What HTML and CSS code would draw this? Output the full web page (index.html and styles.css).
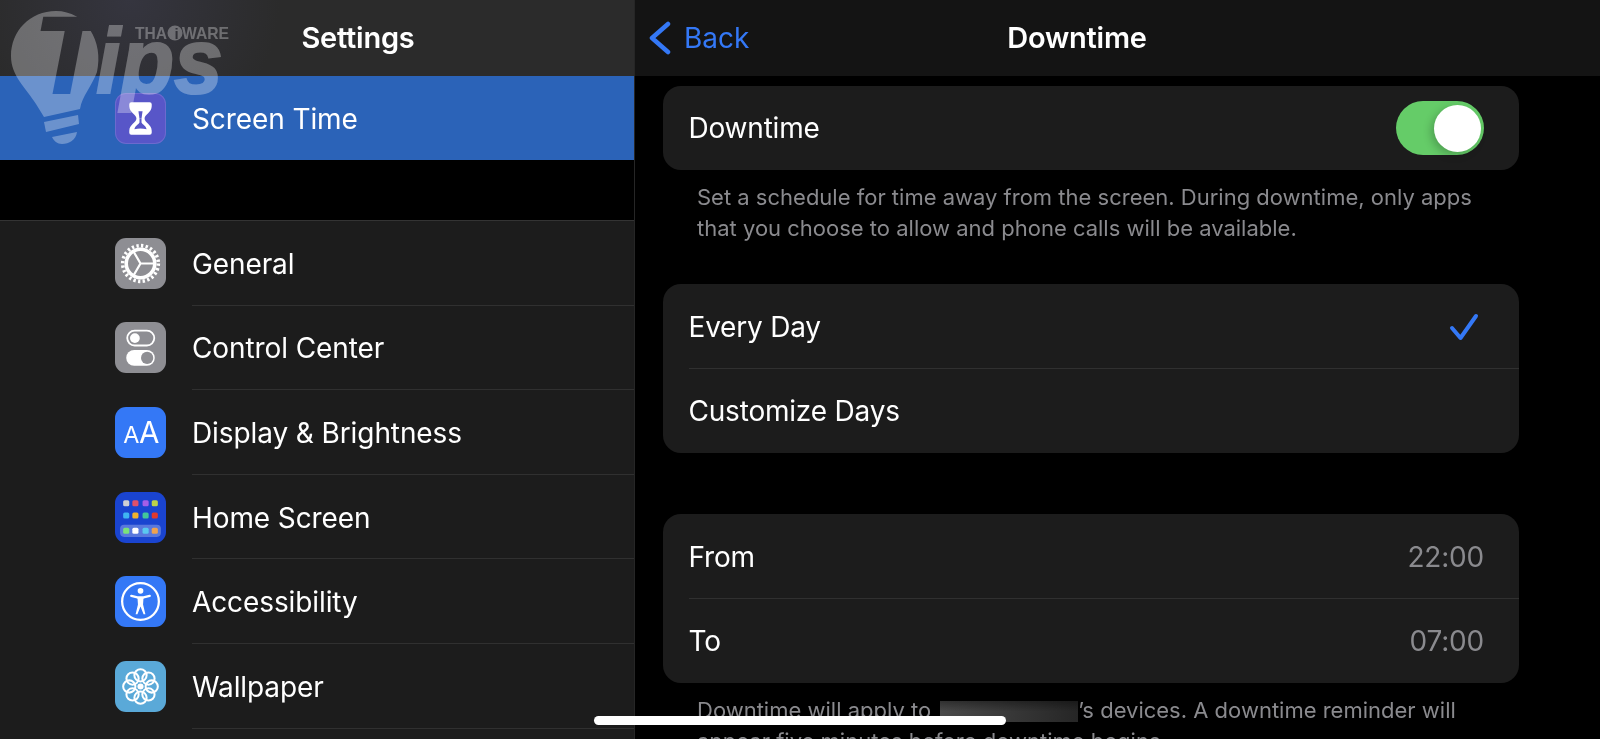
FILE: index.html
```html
<!DOCTYPE html>
<html lang="en">
<head>
<meta charset="utf-8">
<title>Downtime</title>
<link rel="stylesheet" href="styles.css">
</head>
<body>
<div class="screen">
  <aside class="sidebar">
    <header class="side-head"><h1 class="title">Settings</h1></header>
    <div class="row-active">
      <span class="icon icon-purple">
        <svg viewBox="0 0 50 50"><path class="white" d="M14 11q0-2 2-2h18q2 0 2 2v2c0 6-7 8-7 12c0 4 7 6 7 12v2q0 2-2 2h-18q-2 0-2-2v-2c0-6 7-8 7-12c0-4-7-6-7-12z"/><path class="purple" d="M23 18h4l-1 7h-2z"/><path class="purple" d="M24 25h2v4c1 2 4 3 5 6.500c-4-1-8-1-12 0c1-3.500 4-4.500 5-6.500z"/></svg>
      </span>
      <span class="label">Screen Time</span>
    </div>
    <div class="side-gap"></div>
    <ul class="side-list">
      <li class="side-row">
        <span class="icon icon-gray">
          <svg viewBox="0 0 50 50"><circle class="gear-teeth" cx="25" cy="25" r="17.500"/><circle class="gear-ring" cx="25" cy="25" r="14"/><path class="gear-spokes" d="M25 25H39M25 25L18 13M25 25L18 37"/></svg>
        </span>
        <span class="label label-sep">General</span>
      </li>
      <li class="side-row">
        <span class="icon icon-gray">
          <svg viewBox="0 0 50 50"><rect class="sw-out" x="12" y="8.500" width="26.500" height="14.500" rx="7.250"/><circle class="white" cx="19.500" cy="15.800" r="4.800"/><rect class="white" x="11" y="27.500" width="28" height="15.500" rx="7.750"/><circle class="gray" cx="31.500" cy="35.200" r="6"/></svg>
        </span>
        <span class="label label-sep">Control Center</span>
      </li>
      <li class="side-row">
        <span class="icon icon-blue">
          <svg viewBox="0 0 50 50"><text class="aa-small" x="8" y="35">A</text><text class="aa-big" x="23.500" y="35">A</text></svg>
        </span>
        <span class="label label-sep">Display &amp; Brightness</span>
      </li>
      <li class="side-row">
        <span class="icon icon-home">
          <svg viewBox="0 0 50 50">
            <rect class="dock" x="5" y="32" width="40" height="12" rx="4"/>
            <rect class="d1" x="8" y="8" width="6" height="6" rx="1.500"/><rect class="d2" x="17" y="8" width="6" height="6" rx="1.500"/><rect class="d3" x="27" y="8" width="6" height="6" rx="1.500"/><rect class="d4" x="36" y="8" width="6" height="6" rx="1.500"/>
            <rect class="d5" x="8" y="20" width="6" height="6" rx="1.500"/><rect class="d6" x="17" y="20" width="6" height="6" rx="1.500"/><rect class="d7" x="27" y="20" width="6" height="6" rx="1.500"/><rect class="d8" x="36" y="20" width="6" height="6" rx="1.500"/>
            <rect class="d9" x="8" y="35" width="6" height="6" rx="1.500"/><rect class="white" x="17" y="35" width="6" height="6" rx="1.500"/><rect class="d10" x="27" y="35" width="6" height="6" rx="1.500"/><rect class="d11" x="36" y="35" width="6" height="6" rx="1.500"/>
          </svg>
        </span>
        <span class="label label-sep">Home Screen</span>
      </li>
      <li class="side-row">
        <span class="icon icon-blue">
          <svg viewBox="0 0 50 50"><circle class="acc-ring" cx="25" cy="25" r="18"/><circle class="white" cx="25" cy="14.500" r="2.800"/><path class="acc-arms" d="M16 19.500L22 21H28L34 19.500"/><path class="white" d="M22 20.500H28L27.500 28L29.800 37.500H28L25 30L22 37.500H20.200L22.500 28Z"/></svg>
        </span>
        <span class="label label-sep">Accessibility</span>
      </li>
      <li class="side-row">
        <span class="icon icon-sky">
          <svg viewBox="0 0 50 50"><g class="petals">
            <circle cx="25" cy="14" r="6"/><circle cx="25" cy="36" r="6"/><circle cx="14" cy="25" r="6"/><circle cx="36" cy="25" r="6"/>
            <circle cx="17.200" cy="17.200" r="6"/><circle cx="32.800" cy="17.200" r="6"/><circle cx="17.200" cy="32.800" r="6"/><circle cx="32.800" cy="32.800" r="6"/>
          </g><circle class="white" cx="25" cy="25" r="3"/></svg>
        </span>
        <span class="label label-sep">Wallpaper</span>
      </li>
      <li class="side-row"></li>
    </ul>
  </aside>

  <main class="detail">
    <header class="detail-head">
      <a class="back">
        <svg class="chevron" viewBox="0 0 24 34"><path d="M20 3L4 17L20 31"/></svg>
        <span>Back</span>
      </a>
      <h2 class="title">Downtime</h2>
    </header>
    <div class="detail-body">
      <section class="card card-first">
        <div class="card-row">
          <span>Downtime</span>
          <span class="toggle"><span class="knob"></span></span>
        </div>
      </section>
      <p class="note">Set a schedule for time away from the screen. During downtime, only apps<br>that you choose to allow and phone calls will be available.</p>
      <section class="card card-second">
        <div class="card-row card-row-sep">
          <span>Every Day</span>
          <svg class="check" viewBox="0 0 30 28"><path d="M3 15L11.500 25L27 3"/></svg>
        </div>
        <div class="card-row"><span>Customize Days</span></div>
      </section>
      <section class="card card-third">
        <div class="card-row card-row-sep"><span>From</span><span class="value">22:00</span></div>
        <div class="card-row"><span>To</span><span class="value">07:00</span></div>
      </section>
      <p class="note">Downtime will apply to <span class="redact"></span>’s devices. A downtime reminder will<br>appear five minutes before downtime begins.</p>
    </div>
  </main>

  <svg class="watermark" viewBox="0 0 240 150" aria-hidden="true">
    <defs>
      <mask id="cut">
        <rect width="240" height="150" fill="#fff"/>
        <text class="wm-t" x="34" y="93">T</text>
      </mask>
      <mask id="cut-i">
        <rect width="240" height="150" fill="#fff"/>
        <text class="wm-i" x="174.500" y="39">i</text>
      </mask>
    </defs>
    <g class="wm-fill">
      <path mask="url(#cut)" d="M56 11C30 11 11 31 11 56C11 76 26 88 36 104L44 117L80 109C82 96 92 86 97 72C104 42 86 11 56 11Z"/>
      <path d="M44 122L78 115L79 124L46 132Z"/>
      <path d="M52 137L77 132C76 140 69 144 62 144C57 144 54 141 52 137Z"/>
      <text class="wm-ips" x="96" y="93" textLength="127" lengthAdjust="spacingAndGlyphs">ips</text>
      <text class="wm-brand" x="135" y="39" textLength="32" lengthAdjust="spacingAndGlyphs">THA</text>
      <circle mask="url(#cut-i)" cx="175" cy="33" r="7.500"/>
      <text class="wm-brand" x="182" y="39" textLength="47" lengthAdjust="spacingAndGlyphs">WARE</text>
    </g>
  </svg>
  <div class="home-bar"></div>
</div>
</body>
</html>
```
FILE: styles.css
```css
* { box-sizing: border-box; }
html, body { margin: 0; padding: 0; background: #000; }
body { font-family: Inter, "Noto Sans", "Liberation Sans", sans-serif; color: #fff; }
.screen { position: relative; display: flex; width: 1600px; height: 739px; overflow: hidden; background: #000; filter: blur(0.35px); }
.title { margin: 0 0 2px; font-size: 29px; font-weight: 600; letter-spacing: -0.25px; }

.sidebar { flex: 0 0 635px; display: flex; flex-direction: column; border-right: 1px solid #262626; }
.side-head { flex: 0 0 76px; display: flex; align-items: center; justify-content: center; padding-left: 82px; background: radial-gradient(circle at 130px 0, #35353f 0, #2b2b2b 150px); }
.row-active { flex: 0 0 84px; display: flex; align-items: center; padding-left: 115px; gap: 26px; background: #2b63b8; font-size: 28px; }
.side-gap { flex: 0 0 61px; background: #000; border-bottom: 1px solid #333; }
.side-list { flex: 1; list-style: none; margin: 0; padding: 0; background: #1c1c1c; }
.side-row { height: 84.6px; display: flex; align-items: stretch; padding-left: 115px; gap: 26px; font-size: 28px; }
.label { display: flex; align-items: center; flex: 1; padding-top: 2px; letter-spacing: -0.1px; }
.label-sep { border-bottom: 1px solid #303030; }
.icon { flex: 0 0 51px; width: 51px; height: 51px; align-self: center; border-radius: 11px; overflow: hidden; }
.icon svg { display: block; width: 100%; height: 100%; }
.icon-purple { background: #5856c8; box-shadow: inset 0 0 0 1px rgba(255,255,255,.12); }
.icon-gray { background: #8e8e93; }
.icon-blue { background: #3478f6; }
.icon-home { background: #1a44d0; }
.icon-sky { background: #5aa9d8; }
.white { fill: #fff; }
.purple { fill: #5856c8; }
.gray { fill: #8e8e93; }
.gear-teeth { fill: none; stroke: #fff; stroke-width: 3.500; stroke-dasharray: 2.290 2.290; }
.gear-ring { fill: none; stroke: #fff; stroke-width: 3.500; }
.gear-spokes { fill: none; stroke: #fff; stroke-width: 2.200; }
.sw-out { fill: none; stroke: #fff; stroke-width: 1.800; }
.aa-small { font-family: Inter, sans-serif; font-size: 23px; fill: #fff; }
.aa-big { font-family: Inter, sans-serif; font-size: 29px; fill: #fff; }
.dock { fill: rgba(255,255,255,.28); }
.d1 { fill: #cfcfd4; } .d2 { fill: #e0506a; } .d3 { fill: #a45ee8; } .d4 { fill: #bcd24a; }
.d5 { fill: #3fb4f2; } .d6 { fill: #f2b22e; } .d7 { fill: #43c79a; } .d8 { fill: #e0392e; }
.d9 { fill: #7be27a; } .d10 { fill: #5ac8f0; } .d11 { fill: #f0a24e; }
.acc-ring { fill: none; stroke: #fff; stroke-width: 2.200; }
.acc-arms { fill: none; stroke: #fff; stroke-width: 2.400; stroke-linecap: round; stroke-linejoin: round; }
.petals circle { fill: none; stroke: #fff; stroke-width: 2; }

.detail { flex: 1; display: flex; flex-direction: column; min-width: 0; background: #000; }
.detail-head { position: relative; flex: 0 0 76px; display: flex; align-items: center; justify-content: center; padding-right: 81px; background: #141414; }
.back { position: absolute; left: 13px; top: 0; bottom: 0; display: flex; align-items: center; gap: 12px; color: #3478f6; font-size: 28px; }
.chevron { width: 24px; height: 34px; }
.chevron path { fill: none; stroke: #3478f6; stroke-width: 4.500; stroke-linecap: round; stroke-linejoin: round; }
.detail-body { padding: 10px 81px 0 27.500px; }
.card { background: #1c1c1c; border-radius: 18px; font-size: 28px; }
.card-row { height: 84.500px; display: flex; align-items: center; justify-content: space-between; padding: 1px 35px 0 26px; letter-spacing: -0.2px; }
.card-first .card-row { height: 84px; padding-top: 0; }
.card-row-sep { position: relative; }
.card-row-sep::after { content: ""; position: absolute; left: 26px; right: 0; bottom: 0; height: 1px; background: #303030; }
.card-second { margin-top: 41px; }
.card-third { margin-top: 61px; }
.toggle { width: 88px; height: 54px; display: flex; align-items: center; justify-content: flex-end; padding-right: 3px; border-radius: 27px; background: #65cc68; }
.knob { width: 47px; height: 47px; border-radius: 50%; background: #fff; box-shadow: -3px 3px 8px rgba(0,0,0,.22); }
.check { width: 30px; height: 28px; margin-right: 5px; }
.check path { fill: none; stroke: #3478f6; stroke-width: 4; stroke-linecap: round; stroke-linejoin: round; }
.value { color: #8a8a8e; }
.note { margin: 12px 0 0; padding-left: 34.500px; font-size: 22px; line-height: 30.500px; color: #8a8a8e; white-space: nowrap; }
.redact { display: inline-block; width: 138px; height: 21px; margin-left: 3px; vertical-align: -4px; background: linear-gradient(180deg, rgba(0,0,0,.35), rgba(0,0,0,0) 50%), linear-gradient(90deg, #4a4a4a 0, #383838 50%, #262626 100%); }

.watermark { position: absolute; left: 0; top: 0; width: 240px; height: 150px; pointer-events: none; }
.wm-fill { fill: #fff; opacity: .3; }
.wm-t { font-family: "Liberation Sans", sans-serif; font-weight: 700; font-style: italic; font-size: 109px; fill: #000; stroke: #000; stroke-width: 2px; }
.wm-ips { font-family: "Liberation Sans", sans-serif; font-weight: 700; font-style: italic; font-size: 92px; stroke: #fff; stroke-width: 2px; }
.wm-brand { font-family: "Liberation Sans", sans-serif; font-weight: 700; font-size: 17px; }
.wm-i { font-family: "Liberation Sans", sans-serif; font-weight: 700; font-size: 15px; fill: #000; }
.home-bar { position: absolute; left: 594px; top: 716px; width: 412px; height: 9px; border-radius: 5px; background: #fff; }
```
